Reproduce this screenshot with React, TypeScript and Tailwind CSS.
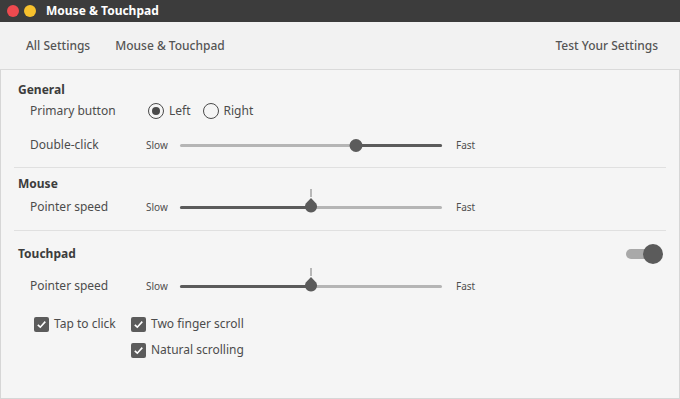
import React from "react";

const font = { fontFamily: '"Noto Sans", "DejaVu Sans", sans-serif' };

function Thumb({ pointed }: { pointed?: boolean }) {
  if (pointed) {
    return (
      <svg width="14" height="24" viewBox="0 0 14 24" className="absolute -translate-x-1/2" style={{ top: -17 }}>
        <line x1="7" y1="0" x2="7" y2="8" stroke="#7a7a7a" strokeWidth="1" />
        <path d="M7 9 L12.2 14.5 A6 6 0 1 1 1.8 14.5 Z" fill="#5b5b5b" />
      </svg>
    );
  }
  return <div className="absolute -translate-x-1/2 -top-[5px] w-[13px] h-[13px] rounded-full bg-[#5b5b5b]" />;
}

function Slider({ value, pointed, inverted }: { value: number; pointed?: boolean; inverted?: boolean }) {
  return (
    <div className="flex items-center">
      <span className="w-[34px] text-[10px] text-[#4f4f4f]">Slow</span>
      <div className="relative w-[262px] h-[3px] bg-[#b5b5b5] rounded-full">
        {inverted ? (
          <div className="absolute right-0 top-0 h-[3px] bg-[#5b5b5b] rounded-full" style={{ width: `${100 - value}%` }} />
        ) : (
          <div className="absolute left-0 top-0 h-[3px] bg-[#5b5b5b] rounded-full" style={{ width: `${value}%` }} />
        )}
        <div className="absolute top-0" style={{ left: `${value}%` }}>
          <Thumb pointed={pointed} />
        </div>
      </div>
      <span className="ml-[14px] text-[10px] text-[#4f4f4f]">Fast</span>
    </div>
  );
}

function Radio({ checked, label }: { checked?: boolean; label: string }) {
  return (
    <div className="flex items-center">
      <div className="w-[16px] h-[16px] rounded-full border-[1.5px] border-[#4a4a4a] flex items-center justify-center">
        {checked && <div className="w-[8px] h-[8px] rounded-full bg-[#4a4a4a]" />}
      </div>
      <span className="ml-[5px]">{label}</span>
    </div>
  );
}

function Check({ label }: { label: string }) {
  return (
    <div className="flex items-center">
      <div className="w-[15px] h-[15px] rounded-[2px] bg-[#5b5b5b] flex items-center justify-center">
        <svg width="11" height="11" viewBox="0 0 11 11">
          <path d="M1.8 5.8 L4.3 8.2 L9.3 2.6" fill="none" stroke="#fff" strokeWidth="1.6" />
        </svg>
      </div>
      <span className="ml-[5px]">{label}</span>
    </div>
  );
}

function Heading({ children, className = "" }: { children: React.ReactNode; className?: string }) {
  return <div className={`h-[18px] pl-[4px] flex items-center font-bold text-[#3c3c3c] ${className}`}>{children}</div>;
}

function Row({ label, children, className = "" }: { label: string; children: React.ReactNode; className?: string }) {
  return (
    <div className={`h-[24px] pl-[16px] flex items-center ${className}`}>
      <span className="w-[116px]">{label}</span>
      {children}
    </div>
  );
}

export default function App() {
  return (
    <div className="w-[680px] h-[399px] flex flex-col bg-[#f5f5f5] text-[12px] text-[#4c4c4c]" style={font}>
      <div className="h-[22px] bg-[#3c3c3c] flex items-center pl-[7px]">
        <div className="w-[12px] h-[12px] rounded-full bg-[#ee4a4f]" />
        <div className="w-[12px] h-[12px] rounded-full bg-[#f7c12d] ml-[5px]" />
        <span className="ml-[10px] text-white font-bold text-[12px]">Mouse &amp; Touchpad</span>
      </div>
      <div className="h-[48px] bg-[#f2f2f2] border-b border-[#dadada] flex items-center px-[26px] text-[#555] font-medium">
        <span>All Settings</span>
        <span className="ml-[25px]">Mouse &amp; Touchpad</span>
        <span className="ml-auto -mr-[4px]">Test Your Settings</span>
      </div>
      <div className="flex-1 border-x border-b border-[#d6d6d6] px-[13px] pt-[11px]">
        <Heading>General</Heading>
        <Row label="Primary button">
          <div className="flex items-center gap-[12px] ml-[2px]">
            <Radio checked label="Left" />
            <Radio label="Right" />
          </div>
        </Row>
        <Row label="Double-click" className="mt-[10px]">
          <Slider value={67} inverted />
        </Row>
        <div className="mt-[10px] h-px bg-[#e0e0e0]" />
        <Heading className="mt-[7px]">Mouse</Heading>
        <Row label="Pointer speed" className="mt-[2px]">
          <Slider value={50} pointed />
        </Row>
        <div className="mt-[11px] h-px bg-[#e0e0e0]" />
        <div className="mt-[14px] h-[18px] flex items-center justify-between">
          <Heading>Touchpad</Heading>
          <div className="relative w-[37px] h-[20px] mr-[3px] flex items-center">
            <div className="w-[28px] h-[10px] rounded-full bg-[#a9a9a9]" />
            <div className="absolute right-0 top-0 w-[20px] h-[20px] rounded-full bg-[#5b5b5b]" />
          </div>
        </div>
        <Row label="Pointer speed" className="mt-[11px]">
          <Slider value={50} pointed />
        </Row>
        <div className="mt-[14px] pl-[20px] flex">
          <div className="w-[97px] h-[24px] flex items-center">
            <Check label="Tap to click" />
          </div>
          <div className="flex flex-col gap-[2px]">
            <div className="h-[24px] flex items-center">
              <Check label="Two finger scroll" />
            </div>
            <div className="h-[24px] flex items-center">
              <Check label="Natural scrolling" />
            </div>
          </div>
        </div>
      </div>
    </div>
  );
}
